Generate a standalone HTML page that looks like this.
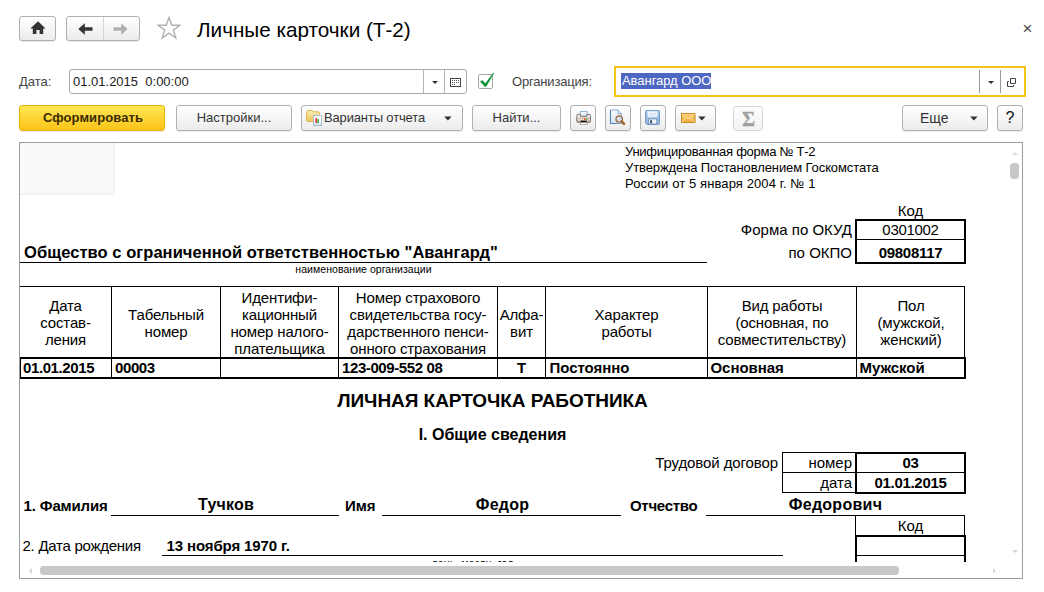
<!DOCTYPE html>
<html lang="ru"><head><meta charset="utf-8"><title>Личные карточки (Т-2)</title>
<style>
html,body{margin:0;padding:0;background:#fff;}
body{width:1044px;height:592px;position:relative;overflow:hidden;font-family:"Liberation Sans",sans-serif;font-size:13px;color:#333;}
.abs{position:absolute;}
.btn{position:absolute;box-sizing:border-box;border:1px solid #b0b0b0;border-radius:3px;background:linear-gradient(#ffffff,#ececec);box-shadow:0 1px 0 rgba(0,0,0,0.08);color:#333;text-align:center;white-space:nowrap;}
.btn.t{height:26px;top:105px;line-height:24px;font-size:13px;}
.lbl{position:absolute;white-space:nowrap;}
.inp{position:absolute;box-sizing:border-box;border:1px solid #a9a9a9;border-radius:3px;background:#fff;}
.tri{position:absolute;width:0;height:0;border-left:4px solid transparent;border-right:4px solid transparent;border-top:4px solid #333;}
.doc{position:absolute;left:19px;top:142px;width:1004px;height:436px;box-sizing:border-box;border:1px solid #a0a0a0;overflow:hidden;background:#fff;color:#000;}
.doc .tx{position:absolute;white-space:nowrap;color:#000;}
.ln{position:absolute;background:#000;}
.tx{position:absolute;white-space:nowrap;color:#000;}
.tx.c{text-align:center;}
.tx.r{text-align:right;}
.tx.b{font-weight:bold;}
.tx.h{font-size:15px;line-height:17px;letter-spacing:-0.15px;}
.tx.d{font-size:15px;line-height:17px;letter-spacing:-0.4px;}
</style></head><body>

<!-- nav buttons -->
<div class="btn" style="left:19px;top:16px;width:37px;height:25px;">
<svg class="abs" style="left:10px;top:4px" width="16" height="14" viewBox="0 0 16 14"><path d="M8 0.3 L15.6 7.6 H13.2 V13 H9.6 V9 H6.4 V13 H2.8 V7.6 H0.4 Z" fill="#333"/></svg>
</div>
<div class="btn" style="left:66px;top:16px;width:74px;height:25px;">
<div class="abs" style="left:36px;top:0;width:1px;height:23px;background:#d4d4d4"></div>
<svg class="abs" style="left:11px;top:5.5px" width="15" height="12" viewBox="0 0 15 12"><path d="M0.3 6 L6.8 0.3 V4.3 H14.5 V7.7 H6.8 V11.7 Z" fill="#333"/></svg>
<svg class="abs" style="left:46px;top:5.5px" width="15" height="12" viewBox="0 0 15 12"><path d="M14.7 6 L8.2 0.3 V4.3 H0.5 V7.7 H8.2 V11.7 Z" fill="#b0b0b0"/></svg>
</div>
<svg class="abs" style="left:157px;top:16px" width="24" height="24" viewBox="0 0 24 24"><path d="M12 1.6 L14.8 9.2 H22.8 L16.4 14.1 L18.8 22 L12 17.2 L5.2 22 L7.6 14.1 L1.2 9.2 H9.2 Z" fill="#fff" stroke="#b0b0b0" stroke-width="1.4" stroke-linejoin="miter"/></svg>
<div class="lbl" style="left:197px;top:18px;font-size:20.7px;line-height:24px;color:#000;">Личные карточки (Т-2)</div>
<div class="lbl" style="left:1022.6px;top:19.6px;font-size:17px;line-height:18px;color:#4a4a4a;">×</div>

<!-- row 2 -->
<div class="lbl" style="left:19px;top:73.6px;line-height:16px;color:#444;">Дата:</div>
<div class="inp" style="left:69px;top:69px;width:398px;height:25px;">
<div class="lbl" style="left:3px;top:4px;line-height:16px;color:#222;white-space:pre;">01.01.2015  0:00:00</div>
<div class="abs" style="left:353px;top:0;width:1px;height:23px;background:#b4b4b4"></div>
<div class="abs" style="left:374px;top:0;width:1px;height:23px;background:#b4b4b4"></div>
<div class="tri" style="left:362px;top:11px;border-left-width:3px;border-right-width:3px;border-top-width:3px;"></div>
<svg class="abs" style="left:380px;top:8px" width="11" height="9" viewBox="0 0 11 9"><rect x="0.5" y="0.5" width="10" height="8" fill="#fff" stroke="#444"/><g fill="#555"><rect x="2" y="2" width="1" height="1"/><rect x="4" y="2" width="1" height="1"/><rect x="6" y="2" width="1" height="1"/><rect x="8" y="2" width="1" height="1"/><rect x="2" y="4" width="1" height="1"/><rect x="4" y="4" width="1" height="1"/><rect x="6" y="4" width="1" height="1"/><rect x="8" y="4" width="1" height="1"/><rect x="2" y="6" width="1" height="1"/><rect x="4" y="6" width="1" height="1"/></g></svg>
</div>
<div class="abs" style="left:478px;top:74px;width:15px;height:15px;box-sizing:border-box;border:1px solid #a8a8a8;border-radius:2px;background:#fff;"></div>
<svg class="abs" style="left:478px;top:71px" width="18" height="18" viewBox="0 0 18 18"><path d="M2 10.6 L4.4 9.2 L7.4 12.2 L15.2 1.8 L16 2.2 L8.2 15.8 L6.8 15.8 Z" fill="#0a9538"/></svg>
<div class="lbl" style="left:512px;top:73.6px;line-height:16px;color:#444;letter-spacing:-0.18px;">Организация:</div>
<div class="abs" style="left:614px;top:66px;width:412px;height:31px;box-sizing:border-box;border:2px solid #f8c414;background:#fff;">
<div class="lbl" style="left:5px;top:5px;line-height:16px;font-size:13px;background:#4e67c2;color:#fff;padding:0 0 0 1px;letter-spacing:-0.05px;">Авангард ООО</div>
<div class="abs" style="left:363px;top:2px;width:1px;height:23px;background:#9a9a9a"></div>
<div class="abs" style="left:384px;top:2px;width:1px;height:23px;background:#9a9a9a"></div>
<div class="tri" style="left:372px;top:13px;border-left-width:3px;border-right-width:3px;border-top-width:3px;"></div>
<svg class="abs" style="left:391px;top:10px" width="9" height="9" viewBox="0 0 9 9"><path d="M3.5 0.5 H8.5 V5.5 H3.5 Z M2 3.5 H0.5 V8.5 H6.5 V7" fill="none" stroke="#444" stroke-width="1"/></svg>
</div>

<!-- row 3 buttons -->
<div class="btn t" style="left:19px;width:146px;border-color:#e8b400;background:linear-gradient(#ffe552,#fcc41a);font-weight:bold;color:#3a2c00;letter-spacing:0.1px;padding-left:2px;">Сформировать</div>
<div class="btn t" style="left:176px;width:116px;">Настройки...</div>
<div class="btn t" style="left:301px;width:162px;">
<svg class="abs" style="left:4px;top:4px" width="18" height="17" viewBox="0 0 18 17"><defs><linearGradient id="fg" x1="0" y1="0" x2="0" y2="1"><stop offset="0" stop-color="#fbeeb8"/><stop offset="1" stop-color="#ecc65a"/></linearGradient></defs><path d="M0.5 2 Q0.5 0.5 2 0.5 H5.5 Q6.8 0.5 7.2 1.8 H12 Q13.5 1.8 13.5 3.3 V11.5 H1.5 Q0.5 11.5 0.5 10.5 Z" fill="url(#fg)" stroke="#d9b555"/><rect x="7.5" y="5.5" width="8" height="10" fill="#fff" stroke="#a8bdd6"/><rect x="8" y="13" width="7" height="2" fill="#d5e3f2"/><rect x="9.3" y="8" width="1.6" height="5" fill="#e03030"/><rect x="11.3" y="9" width="1.6" height="4" fill="#30a040"/></svg>
<div class="lbl" style="left:22px;top:0;line-height:24px;letter-spacing:-0.15px;">Варианты отчета</div>
<svg class="abs" style="left:142px;top:10px" width="8" height="5" viewBox="0 0 8 5"><path d="M0.2 0.4 H7.6 L3.9 4.4 Z" fill="#2e2e2e"/></svg>
</div>
<div class="btn t" style="left:472px;width:89px;">Найти...</div>
<div class="btn t" style="left:570px;width:26px;">
<svg class="abs" style="left:5px;top:5px" width="15.4" height="14.4" viewBox="0 0 16 15"><defs><linearGradient id="pg" x1="0" y1="0" x2="0" y2="1"><stop offset="0" stop-color="#ffffff"/><stop offset="0.55" stop-color="#efe6de"/><stop offset="1" stop-color="#c9ab94"/></linearGradient><linearGradient id="pp" x1="0" y1="0" x2="0" y2="1"><stop offset="0" stop-color="#ffffff"/><stop offset="1" stop-color="#d6e6f5"/></linearGradient></defs><rect x="4.5" y="0.5" width="7" height="5.5" fill="url(#pp)" stroke="#8fb2d2"/><path d="M2.5 3.5 H4.5 V5.5 H11.5 V3.5 H13.5 Q15.2 3.5 15.2 5.5 V10.5 Q15.2 11.8 13.8 11.8 H2.2 Q0.8 11.8 0.8 10.5 V5.5 Q0.8 3.5 2.5 3.5 Z" fill="url(#pg)" stroke="#5e5e5e" stroke-width="0.9"/><rect x="1.5" y="7" width="13" height="0.8" fill="#b99a84"/><rect x="8.3" y="7.8" width="1.6" height="1.4" fill="#e8281e"/><rect x="10.7" y="7.8" width="1.6" height="1.4" fill="#2fae2f"/><rect x="4.8" y="10" width="6.4" height="2" fill="#111"/><rect x="4.5" y="12" width="7" height="2.3" fill="#fff" stroke="#8a8a8a" stroke-width="0.7"/></svg>
</div>
<div class="btn t" style="left:605px;width:26px;">
<svg class="abs" style="left:3.2px;top:3.4px" width="17" height="17" viewBox="0 0 17 17"><defs><linearGradient id="dg" x1="0" y1="0" x2="0.6" y2="1"><stop offset="0" stop-color="#ffffff"/><stop offset="1" stop-color="#cfe1f3"/></linearGradient></defs><path d="M1.5 1 H9 L12.5 4.5 V14.5 H1.5 Z" fill="url(#dg)" stroke="#86a8cc" stroke-width="1"/><path d="M1.5 1 V14.5 H8" fill="none" stroke="#4f7fb2" stroke-width="1.1"/><path d="M9 1 V4.5 H12.5" fill="#e4eef8" stroke="#86a8cc" stroke-width="0.9"/><circle cx="10.2" cy="10" r="3.2" fill="#cfe0f7" stroke="#a26c3c" stroke-width="1.3"/><path d="M12.6 12.4 L15 14.9" stroke="#a0622a" stroke-width="2.6" stroke-linecap="round"/></svg>
</div>
<div class="btn t" style="left:640px;width:26px;">
<svg class="abs" style="left:4.3px;top:4px" width="15" height="15" viewBox="0 0 16 16"><defs><linearGradient id="sg" x1="0" y1="0" x2="0" y2="1"><stop offset="0" stop-color="#b3d0ee"/><stop offset="1" stop-color="#8eb3dc"/></linearGradient></defs><path d="M1.6 0.6 H14.4 Q15.4 0.6 15.4 1.6 V14.4 Q15.4 15.4 14.4 15.4 H2.2 L0.6 13.8 V1.6 Q0.6 0.6 1.6 0.6 Z" fill="url(#sg)" stroke="#6a92c0"/><rect x="3" y="1.2" width="10" height="6.3" fill="#fbfdff" stroke="#b9d2ec" stroke-width="0.6"/><rect x="4" y="3" width="8" height="0.9" fill="#bfd8f0"/><rect x="4" y="5" width="8" height="0.9" fill="#bfd8f0"/><rect x="4" y="9.5" width="8.6" height="5.4" fill="#eef1f5" stroke="#5f86b2" stroke-width="0.8"/><rect x="5.6" y="10.8" width="1.9" height="3.3" fill="#39475a"/></svg>
</div>
<div class="btn t" style="left:675px;width:41px;">
<svg class="abs" style="left:5px;top:7px" width="14.5" height="10" viewBox="0 0 15 11" preserveAspectRatio="none"><defs><linearGradient id="mg" x1="0" y1="0" x2="0" y2="1"><stop offset="0" stop-color="#f9d27a"/><stop offset="1" stop-color="#efa93a"/></linearGradient></defs><rect x="0.5" y="0.5" width="14" height="10" fill="url(#mg)" stroke="#c48a22"/><path d="M1 1 L7.5 6.2 L14 1 M1 10 L5.6 5 M14 10 L9.4 5" fill="none" stroke="#fbe6b0" stroke-width="0.9"/></svg>
<svg class="abs" style="left:22px;top:10px" width="8" height="5" viewBox="0 0 8 5"><path d="M0.2 0.4 H7.6 L3.9 4.4 Z" fill="#2e2e2e"/></svg>
</div>
<div class="btn" style="left:733px;top:106px;width:30px;height:25px;border-color:#d6d6d6;background:linear-gradient(#fdfdfd,#f3f3f3);box-shadow:none;">
<div class="lbl" style="left:0.5px;width:28px;top:0px;line-height:25px;font-family:'Liberation Serif',serif;font-size:20px;font-weight:bold;color:#a0a0a0;text-align:center;-webkit-text-stroke:0.3px #a0a0a0;">Σ</div>
</div>
<div class="btn t" style="left:902px;width:86px;"><div class="lbl" style="left:17px;top:0;line-height:24px;font-size:14px;">Еще</div><svg class="abs" style="left:67px;top:10px" width="8" height="5" viewBox="0 0 8 5"><path d="M0.2 0.4 H7.6 L3.9 4.4 Z" fill="#2e2e2e"/></svg></div>
<div class="btn t" style="left:997px;width:26px;font-size:16px;color:#111;">?</div>

<!-- document -->
<div class="abs" style="left:19px;top:142px;width:1004px;height:437px;box-sizing:border-box;border:1px solid #9c9c9c;"></div>
<div class="abs" id="clip" style="left:20px;top:143px;width:988px;height:419px;overflow:hidden;">
<div class="abs" style="left:-20px;top:-143px;width:1044px;height:700px;">
<div class="abs" style="left:20px;top:143px;width:95px;height:52px;background:#f9f9f9;border-right:2px solid #f1f1f1;border-bottom:2px solid #f1f1f1;box-sizing:border-box;"></div>

<div class="tx" style="left:625px;top:143.8px;font-size:13px;line-height:16px;letter-spacing:-0.27px;">Унифицированная форма № Т-2</div>
<div class="tx" style="left:625px;top:159.8px;font-size:13px;line-height:16px;letter-spacing:-0.1px;">Утверждена Постановлением Госкомстата</div>
<div class="tx" style="left:625px;top:175.8px;font-size:13px;line-height:16px;letter-spacing:0.1px;">России от 5 января 2004 г. № 1</div>

<div class="tx c" style="left:856px;width:109px;top:201.5px;font-size:15px;line-height:17px;">Код</div>
<div class="tx r" style="left:652px;width:200px;top:221.3px;font-size:15px;line-height:17px;">Форма по ОКУД</div>
<div class="tx r" style="left:652px;width:200px;top:243.8px;font-size:15px;line-height:17px;">по ОКПО</div>
<div class="abs" style="left:855px;top:219px;width:111px;height:45px;box-sizing:border-box;border:2px solid #000;"></div>
<div class="ln" style="left:856px;top:239px;width:109px;height:1px;"></div>
<div class="tx c" style="left:856px;width:109px;top:221.3px;font-size:15px;line-height:17px;letter-spacing:-0.3px;">0301002</div>
<div class="tx c b" style="left:856px;width:109px;top:243.8px;font-size:15px;line-height:17px;letter-spacing:-0.3px;">09808117</div>

<div class="tx b" style="left:24px;top:242px;font-size:16.5px;line-height:20px;letter-spacing:0.06px;">Общество с ограниченной ответственностью "Авангард"</div>
<div class="ln" style="left:20px;top:262px;width:687px;height:1px;"></div>
<div class="tx c" style="left:20px;width:687px;top:263.2px;font-size:10.5px;line-height:12px;letter-spacing:0.05px;">наименование организации</div>

<!-- table -->
<div class="ln" style="left:20px;top:286px;width:945px;height:1px;"></div>
<div class="ln" style="left:111px;top:286px;width:1px;height:93px;"></div>
<div class="ln" style="left:220px;top:286px;width:1px;height:93px;"></div>
<div class="ln" style="left:338px;top:286px;width:1px;height:93px;"></div>
<div class="ln" style="left:497px;top:286px;width:1px;height:93px;"></div>
<div class="ln" style="left:545px;top:286px;width:1px;height:93px;"></div>
<div class="ln" style="left:707px;top:286px;width:1px;height:93px;"></div>
<div class="ln" style="left:856px;top:286px;width:1px;height:93px;"></div>
<div class="ln" style="left:964px;top:286px;width:1px;height:93px;"></div>
<div class="abs" style="left:19px;top:357px;width:947px;height:22px;box-sizing:border-box;border:2px solid #000;"></div>

<div class="tx c h" style="left:20px;width:91px;top:296.5px;">Дата<br>состав-<br>ления</div>
<div class="tx c h" style="left:112px;width:108px;top:305.5px;">Табельный<br>номер</div>
<div class="tx c h" style="left:221px;width:117px;top:288.5px;">Идентифи-<br>кационный<br>номер налого-<br>плательщика</div>
<div class="tx c h" style="left:339px;width:158px;top:288.5px;">Номер страхового<br>свидетельства госу-<br>дарственного пенси-<br>онного страхования</div>
<div class="tx c h" style="left:498px;width:47px;top:305.5px;">Алфа-<br>вит</div>
<div class="tx c h" style="left:546px;width:161px;top:305.5px;">Характер<br>работы</div>
<div class="tx c h" style="left:708px;width:148px;top:296.5px;">Вид работы<br>(основная, по<br>совместительству)</div>
<div class="tx c h" style="left:857px;width:108px;top:296.5px;">Пол<br>(мужской,<br>женский)</div>

<div class="tx b d" style="left:23px;top:359px;">01.01.2015</div>
<div class="tx b d" style="left:115px;top:359px;">00003</div>
<div class="tx b d" style="left:342px;top:359px;">123-009-552 08</div>
<div class="tx b d c" style="left:498px;width:47px;top:359px;">Т</div>
<div class="tx b d" style="left:549.5px;top:359px;letter-spacing:-0.05px;">Постоянно</div>
<div class="tx b d" style="left:710.5px;top:359px;letter-spacing:-0.05px;">Основная</div>
<div class="tx b d" style="left:859.5px;top:359px;letter-spacing:-0.05px;">Мужской</div>

<div class="tx b c" style="left:20px;width:945px;top:390px;font-size:19px;line-height:22px;letter-spacing:-0.05px;">ЛИЧНАЯ КАРТОЧКА РАБОТНИКА</div>
<div class="tx b c" style="left:20px;width:945px;top:424.5px;font-size:16px;line-height:20px;">I. Общие сведения</div>

<div class="tx r" style="left:600px;width:178px;top:454px;font-size:15px;line-height:17px;letter-spacing:-0.1px;">Трудовой договор</div>
<div class="abs" style="left:782px;top:452px;width:75px;height:41px;box-sizing:border-box;border:1px solid #000;"></div>
<div class="ln" style="left:782px;top:472px;width:75px;height:1px;"></div>
<div class="abs" style="left:855px;top:452px;width:111px;height:42px;box-sizing:border-box;border:2px solid #000;"></div>
<div class="ln" style="left:856px;top:472px;width:109px;height:1px;"></div>
<div class="tx r" style="left:783px;width:69px;top:454px;font-size:15px;line-height:17px;">номер</div>
<div class="tx r" style="left:783px;width:69px;top:473.5px;font-size:15px;line-height:17px;">дата</div>
<div class="tx c b" style="left:856px;width:109px;top:454px;font-size:15px;line-height:17px;letter-spacing:-0.3px;">03</div>
<div class="tx c b" style="left:856px;width:109px;top:473.5px;font-size:15px;line-height:17px;letter-spacing:-0.3px;">01.01.2015</div>

<div class="tx b" style="left:23.5px;top:497px;font-size:15px;line-height:17px;letter-spacing:-0.15px;">1. Фамилия</div>
<div class="ln" style="left:111px;top:515px;width:228px;height:1px;"></div>
<div class="tx b c" style="left:112px;width:228px;top:495px;font-size:16px;line-height:20px;letter-spacing:0.2px;">Тучков</div>
<div class="tx b" style="left:345px;top:497px;font-size:15px;line-height:17px;letter-spacing:-0.1px;">Имя</div>
<div class="ln" style="left:382px;top:515px;width:239px;height:1px;"></div>
<div class="tx b c" style="left:383px;width:239px;top:495px;font-size:16px;line-height:20px;letter-spacing:0.2px;">Федор</div>
<div class="tx b" style="left:630px;top:497px;font-size:15px;line-height:17px;letter-spacing:-0.3px;">Отчество</div>
<div class="ln" style="left:706px;top:515px;width:259px;height:1px;"></div>
<div class="tx b c" style="left:706px;width:259px;top:495px;font-size:16px;line-height:20px;letter-spacing:0.27px;">Федорович</div>

<div class="ln" style="left:855px;top:515px;width:1px;height:21px;"></div>
<div class="ln" style="left:964px;top:515px;width:1px;height:21px;"></div>
<div class="tx c" style="left:856px;width:109px;top:517px;font-size:15px;line-height:17px;">Код</div>
<div class="abs" style="left:855px;top:535px;width:111px;height:60px;box-sizing:border-box;border:2px solid #000;"></div>
<div class="ln" style="left:856px;top:555px;width:109px;height:1px;"></div>

<div class="tx" style="left:22.5px;top:537.2px;font-size:15px;line-height:17px;letter-spacing:-0.26px;">2. Дата рождения</div>
<div class="tx b" style="left:166.5px;top:537.2px;font-size:15px;line-height:17px;letter-spacing:-0.12px;">13 ноября 1970 г.</div>
<div class="ln" style="left:162px;top:555px;width:621px;height:1px;"></div>
<div class="tx c" style="left:162px;width:621px;top:557.2px;font-size:10.5px;line-height:12px;letter-spacing:0.1px;">день, месяц, год</div>
</div></div>

<!-- scrollbars -->
<div class="abs" style="left:1010px;top:163px;width:9px;height:16px;border-radius:3.5px;background:#c8c8c8;"></div>
<div class="abs" style="left:1012px;top:152px;width:0;height:0;border-left:3px solid transparent;border-right:3px solid transparent;border-bottom:3px solid #dcdcdc;"></div>
<div class="abs" style="left:1012px;top:550px;width:0;height:0;border-left:3px solid transparent;border-right:3px solid transparent;border-top:3px solid #d4d4d4;"></div>
<div class="abs" style="left:40px;top:566px;width:859px;height:9px;border-radius:3.5px;background:#c8c8c8;"></div>
<div class="abs" style="left:29px;top:568px;width:0;height:0;border-top:3px solid transparent;border-bottom:3px solid transparent;border-right:3px solid #d4d4d4;"></div>
<div class="abs" style="left:993px;top:568px;width:0;height:0;border-top:3px solid transparent;border-bottom:3px solid transparent;border-left:3px solid #dcdcdc;"></div>
</body></html>
